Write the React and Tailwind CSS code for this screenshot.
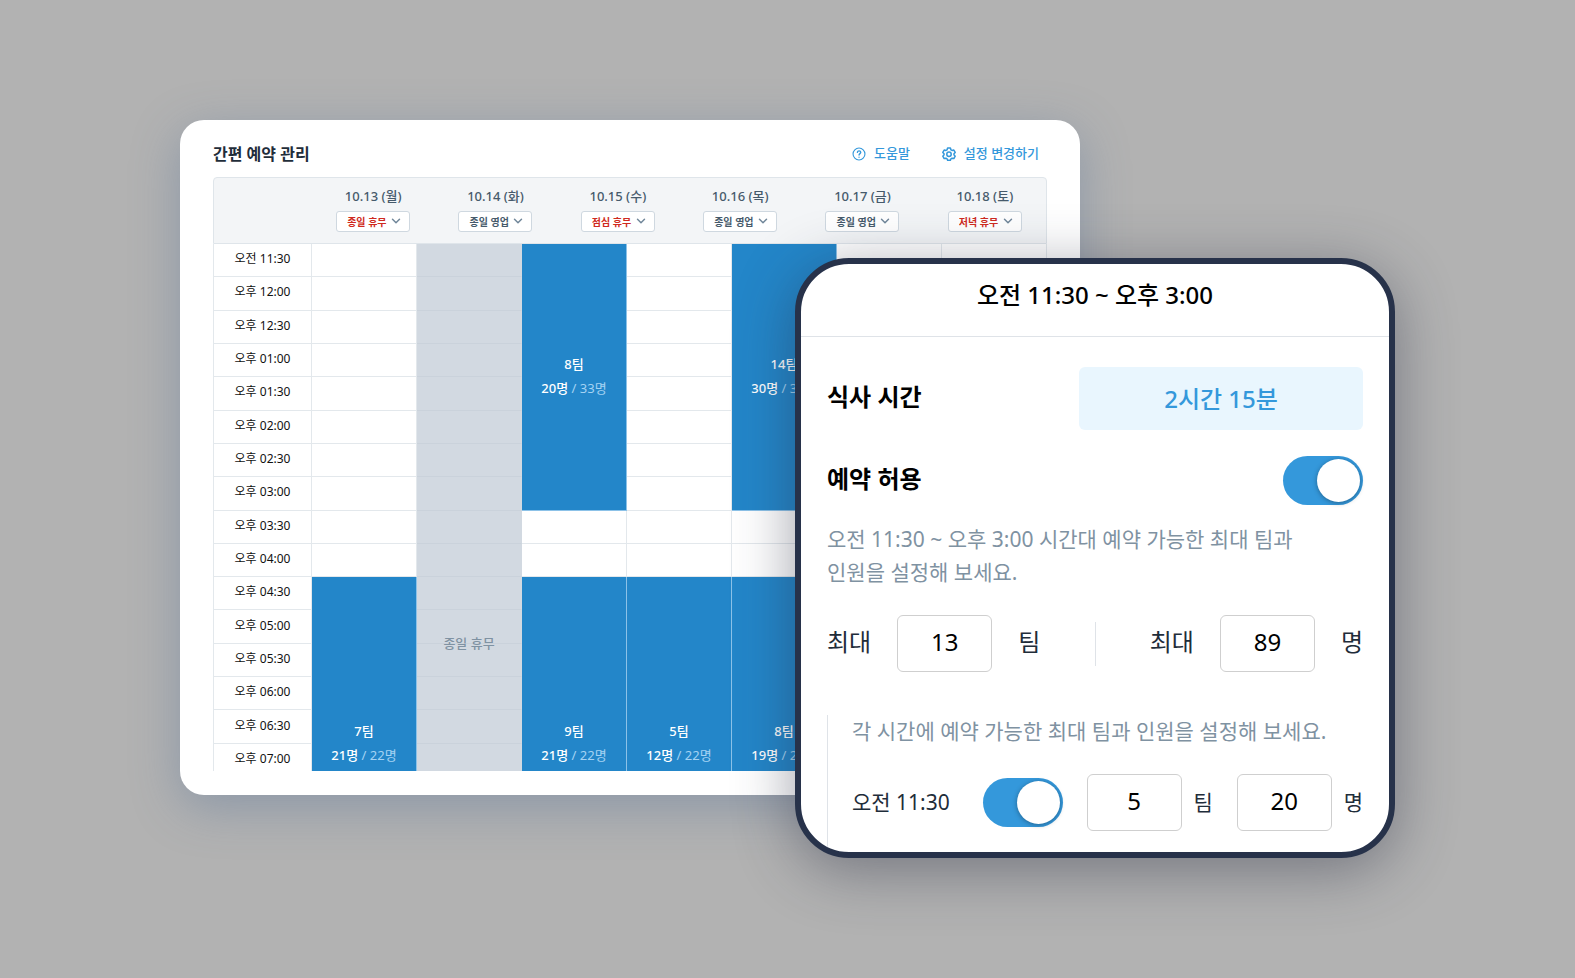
import React, { useState } from 'react'
import { ChevronDown } from 'lucide-react'

const STATUS_OPTIONS = ['종일 영업', '종일 휴무', '점심 휴무', '저녁 휴무']

const DAYS = [
  { date: '10.13 (월)', status: '종일 휴무' },
  { date: '10.14 (화)', status: '종일 영업' },
  { date: '10.15 (수)', status: '점심 휴무' },
  { date: '10.16 (목)', status: '종일 영업' },
  { date: '10.17 (금)', status: '종일 영업' },
  { date: '10.18 (토)', status: '저녁 휴무' },
]

const TIMES = [
  '오전 11:30', '오후 12:00', '오후 12:30', '오후 01:00',
  '오후 01:30', '오후 02:00', '오후 02:30', '오후 03:00',
  '오후 03:30', '오후 04:00', '오후 04:30', '오후 05:00',
  '오후 05:30', '오후 06:00', '오후 06:30', '오후 07:00',
]

// start / span are counted in half-hour rows, open blocks run on past the last row
const COLUMNS = [
  { blocks: [{ start: 10, span: 6, open: true, teams: 7, people: 21, max: 22 }] },
  { closed: true, blocks: [] },
  {
    blocks: [
      { start: 0, span: 8, teams: 8, people: 20, max: 33 },
      { start: 10, span: 6, open: true, teams: 9, people: 21, max: 22 },
    ],
  },
  { blocks: [{ start: 10, span: 6, open: true, teams: 5, people: 12, max: 22 }] },
  {
    blocks: [
      { start: 0, span: 8, teams: 14, people: 30, max: 33 },
      { start: 10, span: 6, open: true, teams: 8, people: 19, max: 22 },
    ],
  },
  { blocks: [] },
  { blocks: [] },
]

const HelpIcon = () => (
  <svg className="w-[14px] h-[14px]" viewBox="0 0 24 24" fill="none" stroke="currentColor" strokeWidth="1.9" strokeLinecap="round">
    <circle cx="12" cy="12" r="10.2" />
    <path strokeWidth="2.3" d="M9.200 9.200c.2-1.700 1.400-2.600 2.900-2.600 1.600 0 2.900 1 2.900 2.600 0 2-2.900 2.300-2.900 4.500M12.100 17.300v.1" />
  </svg>
)

const GearIcon = () => (
  <svg className="w-[14px] h-[14px]" viewBox="0 0 24 24" fill="none" stroke="currentColor" strokeWidth="2.6" strokeLinejoin="round">
    <path d="M9.600 1.800h4.800l.9 3 1.900 1.100 3.100-.7 2.300 4.100-2.100 2.300v1.800l2.100 2.300-2.300 4.100-3.100-.7-1.900 1.100-.9 2.500H9.600l-.9-2.500-1.900-1.100-3.100.7-2.300-4.100 2.100-2.300v-1.800L1.400 9.300l2.300-4.100 3.100.7 1.900-1.100z" />
    <circle cx="12" cy="12.300" r="3.800" />
  </svg>
)

const DayHeader = ({ date, status }) => {
  const [value, setValue] = useState(status)

  return (
    <div className="flex flex-col items-center pt-2">
      <span className="text-[13px] leading-5 font-medium text-[#465a6b]">{date}</span>
      <div className="relative mt-[5px]">
        <select
          aria-label={date}
          value={value}
          onChange={(e) => setValue(e.target.value)}
          className={`block appearance-none w-[74px] h-[21px] pl-[10px] rounded-[3px] border border-[#cfd8e0] bg-white text-[10px] leading-4 font-bold ${value.includes('휴무') ? 'text-[#cf2a20]' : 'text-[#465a6b]'}`}
        >
          {STATUS_OPTIONS.map((option) => (
            <option key={option}>{option}</option>
          ))}
        </select>
        <ChevronDown className="absolute right-[7px] top-[3px] w-[14px] h-[14px] text-[#71879a] pointer-events-none" strokeWidth={2.5} />
      </div>
    </div>
  )
}

const BodyCell = ({ column, row }) => {
  const block = column.blocks.find((b) => row >= b.start && row < b.start + b.span)

  if (block) {
    if (block.start !== row) return null
    return (
      <td
        rowSpan={block.span}
        className={`bg-[#2386c9] border-r border-b border-[#8cc2e8] text-center text-[13px] leading-6 text-white ${block.open ? 'align-bottom pb-[9px]' : 'align-middle pb-0.5'}`}
      >
        <p className="font-medium">{block.teams}팀</p>
        <p>
          <span className="font-medium">{block.people}명</span>
          <span className="text-[#a5d3f3]"> / {block.max}명</span>
        </p>
      </td>
    )
  }

  if (column.closed) {
    return (
      <td className="relative bg-[#d2d9e1] border-r border-b border-r-[#d2d9e1] border-b-[#cad2db]">
        {row === 11 && (
          <span className="absolute inset-x-0 bottom-0 z-10 translate-y-1/2 text-center text-[13px] leading-5 font-medium text-[#7f92a2]">
            종일 휴무
          </span>
        )}
      </td>
    )
  }

  return <td className="border-r border-b border-[#e3e8ec]" />
}

const Schedule = () => (
  <section className="mr-[315px] rounded-3xl bg-white px-[33px] pt-[22px] pb-6 shadow-[0_12px_48px_rgba(80,110,150,0.4)]">
    <header className="flex items-center justify-between h-[35px] pb-[11px]">
      <h1 className="text-base leading-6 font-bold text-[#1f2d3a]">간편 예약 관리</h1>
      <nav className="flex items-center gap-8 pr-2 text-[13px] leading-5 font-medium text-[#3498db]">
        <a href="#help" className="flex items-center gap-2">
          <HelpIcon />
          <span className="pb-[3px]">도움말</span>
        </a>
        <a href="#settings" className="flex items-center gap-2">
          <GearIcon />
          <span className="pb-[3px]">설정 변경하기</span>
        </a>
      </nav>
    </header>

    <div className="grid grid-cols-[98px_repeat(6,1fr)] h-[67px] rounded-t border border-[#dfe5ea] bg-[#f3f5f7]">
      <div />
      {DAYS.map((day) => (
        <DayHeader key={day.date} {...day} />
      ))}
    </div>

    {/* Time table, the last row is a little shorter */}
    <div className="h-[527px] overflow-hidden border-l border-[#e3e8ec]">
      <table className="table-fixed w-full h-[533px] border-separate border-spacing-0">
        <colgroup>
          <col className="w-[98px]" />
          {COLUMNS.map((_, i) => (
            <col key={i} />
          ))}
        </colgroup>
        <tbody>
          {TIMES.map((time, row) => (
            <tr key={time} className="h-[33px]">
              <th scope="row" className="pb-0.5 border-r border-b border-[#e3e8ec] text-center text-xs leading-4 font-normal text-[#111]">
                {time}
              </th>
              {COLUMNS.map((column, i) => (
                <BodyCell key={i} column={column} row={row} />
              ))}
            </tr>
          ))}
        </tbody>
      </table>
    </div>
  </section>
)

const Toggle = ({ id, label }) => (
  <input
    id={id}
    type="checkbox"
    role="switch"
    aria-label={label}
    defaultChecked
    className="appearance-none shrink-0 flex items-center w-20 h-[49px] px-[3px] rounded-full bg-gray-300 checked:bg-[#3498db] checked:justify-end cursor-pointer before:block before:w-[43px] before:h-[43px] before:rounded-full before:bg-white before:shadow-[0_1px_5px_rgba(0,0,0,0.35)]"
  />
)

const NumberInput = ({ id, label, value }) => (
  <input
    id={id}
    type="text"
    inputMode="numeric"
    aria-label={label}
    defaultValue={value}
    className="w-[95px] h-[57px] pb-1 rounded-md border border-[#cfcfcf] bg-white text-center text-2xl text-black"
  />
)

const SettingsPanel = () => (
  <section className="absolute right-0 bottom-0 w-[600px] overflow-hidden rounded-[54px] border-[6px] border-[#27324a] bg-white shadow-[0_12px_60px_rgba(40,45,65,0.45)]">
    <h2 className="h-[73px] pt-[11px] border-b border-[#dfe3e8] text-center text-2xl leading-10 font-medium text-black">
      오전 11:30 ~ 오후 3:00
    </h2>

    <div className="px-[26px] pt-[30px] pb-[21px]">
      <div className="flex items-center justify-between">
        <span className="pb-1 text-2xl font-bold text-black">식사 시간</span>
        <button type="button" className="w-[284px] h-[63px] rounded-md bg-[#e9f6fe] text-2xl font-medium text-[#3498db]">
          2시간 15분
        </button>
      </div>

      <div className="mt-[26px] flex items-center justify-between">
        <label htmlFor="allow" className="pb-1 text-2xl font-bold text-black">예약 허용</label>
        <Toggle id="allow" label="예약 허용" />
      </div>

      <p className="mt-[18px] text-[21px] leading-[33px] text-[#7f92a2]">
        오전 11:30 ~ 오후 3:00 시간대 예약 가능한 최대 팀과
        <br />
        인원을 설정해 보세요.
      </p>

      <div className="mt-[26px] flex items-center justify-between text-2xl text-[#1f2d3a]">
        <div className="flex items-center gap-[26px]">
          <label htmlFor="max-teams" className="pb-1">최대</label>
          <NumberInput id="max-teams" label="최대 팀" value="13" />
          <span className="pb-1">팀</span>
        </div>
        <div className="w-px h-11 bg-[#dfe3e8]" />
        <div className="flex items-center gap-[26px]">
          <label htmlFor="max-people" className="pb-1">최대</label>
          <NumberInput id="max-people" label="최대 명" value="89" />
          <span className="pb-1">명</span>
        </div>
      </div>

      <div className="mt-[43px] -mb-[21px] pb-[21px] pl-6 border-l border-[#dfe3e8]">
        <p className="text-[21px] leading-[33px] text-[#7f92a2]">각 시간에 예약 가능한 최대 팀과 인원을 설정해 보세요.</p>
        <div className="mt-[26px] flex items-center justify-between text-[21px] text-[#1f2d3a]">
          <label htmlFor="slot" className="w-[107px]">오전 11:30</label>
          <Toggle id="slot" label="오전 11:30" />
          <div className="flex items-center gap-3">
            <NumberInput id="slot-teams" label="오전 11:30 팀" value="5" />
            <label htmlFor="slot-teams">팀</label>
          </div>
          <div className="flex items-center gap-3">
            <NumberInput id="slot-people" label="오전 11:30 명" value="20" />
            <label htmlFor="slot-people">명</label>
          </div>
        </div>
      </div>
    </div>
  </section>
)

const App = () => {
  return (
    <main className="min-h-screen flex items-center bg-[#b2b2b2] px-[180px] py-[120px] font-['Noto_Sans','Noto_Sans_CJK_KR',sans-serif]">
      <div className="relative w-full pb-[63px]">
        <Schedule />
        <SettingsPanel />
      </div>
    </main>
  )
}

export default App
